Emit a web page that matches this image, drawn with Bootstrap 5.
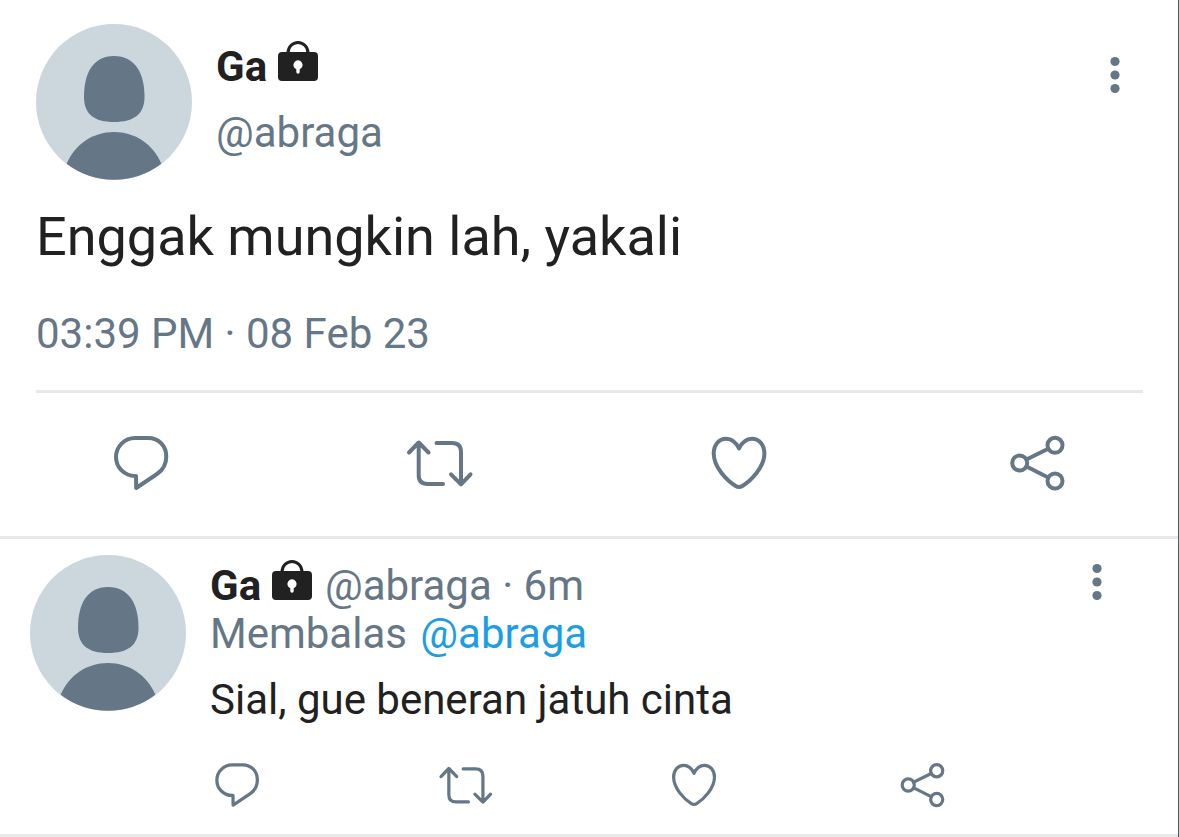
<!DOCTYPE html>
<html lang="id">
<head>
<meta charset="utf-8">
<meta name="viewport" content="width=device-width, initial-scale=1">
<title>Ga (@abraga)</title>
<link href="https://cdn.jsdelivr.net/npm/bootstrap@5.3.0/dist/css/bootstrap.min.css" rel="stylesheet">
<style>
:root { --ink:#212121; --slate:#657786; --rule:#e8e8e8; --sky:#1c9ee6; }
body { font-family:Roboto,"Liberation Sans",sans-serif; font-size:42px; line-height:48px; color:var(--ink); background:#fff; }
main { border-right:1px solid #54575a; }
article { border-bottom:3px solid var(--rule); }
.slate { color:var(--slate); }
.post { padding-top:24px; }
.post-body { padding:0 35px 0 36px; }
.post-names { margin-top:19px; gap:18px; }
.post-text { font-size:54px; line-height:64px; margin:25px 0 41px; }
.post-time { padding-bottom:32px; border-bottom:3px solid var(--rule); }
.reply { padding-top:16px; }
.reply-head { padding:0 53px 0 30px; }
.reply-names { margin-top:7px; }
.reply-text { margin-top:18px; }
.gap-avatar { gap:24px; }
.avatar { width:156px; height:156px; }
.lock { width:40px; height:40px; margin-top:-4px; vertical-align:baseline; }
.icon-btn { padding:0; border:0; background:none; color:var(--slate); line-height:0; }
.menu-btn { width:56px; height:54px; }
.post .menu-btn { margin-top:24px; }
.post-actions { padding:34px 104px 37px 105px; }
.post-actions svg { width:72px; height:72px; }
.reply-actions { padding:32px 226px 20px 208px; }
.reply-actions svg { width:58px; height:58px; }
.handle { margin-left:3px; }
.mention { color:var(--sky); text-decoration:none; }
.line-art { fill:none; stroke:currentColor; stroke-width:4; stroke-linecap:round; stroke-linejoin:round; }
</style>
</head>
<body>
<svg class="d-none" aria-hidden="true">
  <symbol id="person" viewBox="0 0 156 156">
    <circle cx="78" cy="78" r="78" fill="#ccd6dd"/>
    <path fill="#657786" d="M78 32C99 32 108.500 49 108.500 73C108.500 90 98 98 78 98S48 90 48 73C48 49 57 32 78 32Z"/>
    <path fill="#657786" d="M30.600 139.800C39 120 57 108 78 108S117 120 125.400 139.800A78 78 0 0 1 30.600 139.800Z"/>
  </symbol>
  <symbol id="padlock" viewBox="0 0 40 40">
    <path fill="none" stroke="#212121" stroke-width="3" d="M10 13V12A10 10.500 0 0 1 30 12V13"/>
    <path fill="#212121" fill-rule="evenodd" d="M4 11H36A4 4 0 0 1 40 15V36A4 4 0 0 1 36 40H4A4 4 0 0 1 0 36V15A4 4 0 0 1 4 11ZM18.300 28.200V31A1.700 1.700 0 0 0 21.700 31V28.200A4.600 4.600 0 1 0 18.300 28.200Z"/>
  </symbol>
  <symbol id="dots" viewBox="0 0 56 54"><g fill="currentColor"><circle cx="28" cy="13.500" r="4.600"/><circle cx="28" cy="27" r="4.600"/><circle cx="28" cy="40.500" r="4.600"/></g></symbol>
  <symbol id="bubble" viewBox="0 0 72 72"><path class="line-art" d="M31 49H30A19 19 0 0 1 30 11H43C54 11 61.300 19 61.300 29.500C61.300 37 58 43 52 47L31.200 61Z"/></symbol>
  <symbol id="repost" viewBox="0 0 72 72"><path class="line-art" d="M5 25.500L14.700 15.500L24.500 25.500M14.700 16V48Q14.700 57 23.500 57H39M32.500 16H48Q57 16 57 25V57M47 47.300L57 57.300L66.500 47.300"/></symbol>
  <symbol id="heart" viewBox="0 0 72 72"><path class="line-art" d="M36 21.500C32.700 14.500 28.200 11.700 23.200 11.700C15.700 11.700 10.700 18 10.700 26.500C10.700 40 23.700 53.500 32.700 59Q36 61 39.300 59C48.300 53.500 61.400 40 61.400 26.500C61.400 18 56.400 11.700 48.900 11.700C43.900 11.700 39.300 14.500 36 21.500Z"/></symbol>
  <symbol id="share" viewBox="0 0 72 72"><g class="line-art"><circle cx="17.700" cy="36" r="7.500"/><circle cx="53" cy="18.300" r="7.500"/><circle cx="53" cy="54" r="7.500"/><path d="M24.500 32.500L46.200 21.700M24.500 39.500L46.200 50.500"/></g></symbol>
</svg>
<main>
  <article class="post">
    <div class="post-body">
      <header class="d-flex align-items-start gap-avatar">
        <svg class="avatar flex-shrink-0" aria-hidden="true"><use href="#person"/></svg>
        <div class="post-names d-flex flex-column flex-grow-1">
          <div><strong>Ga</strong> <svg class="lock" role="img" aria-label="Terkunci"><use href="#padlock"/></svg></div>
          <div class="slate">@abraga</div>
        </div>
        <button type="button" class="icon-btn menu-btn" aria-label="Menu"><svg width="56" height="54"><use href="#dots"/></svg></button>
      </header>
      <p class="post-text">Enggak mungkin lah, yakali</p>
      <div class="post-time slate">03:39 PM · 08 Feb 23</div>
    </div>
    <div class="post-actions d-flex justify-content-between">
      <button type="button" class="icon-btn" aria-label="Balas"><svg><use href="#bubble"/></svg></button>
      <button type="button" class="icon-btn" aria-label="Retweet"><svg><use href="#repost"/></svg></button>
      <button type="button" class="icon-btn" aria-label="Suka"><svg><use href="#heart"/></svg></button>
      <button type="button" class="icon-btn" aria-label="Bagikan"><svg><use href="#share"/></svg></button>
    </div>
  </article>
  <article class="reply">
    <div class="reply-head d-flex align-items-start gap-avatar">
      <svg class="avatar flex-shrink-0" aria-hidden="true"><use href="#person"/></svg>
      <div class="reply-names flex-grow-1">
        <div><strong>Ga</strong> <svg class="lock" role="img" aria-label="Terkunci"><use href="#padlock"/></svg> <span class="slate handle">@abraga · 6m</span></div>
        <div class="slate">Membalas <a class="mention handle" href="#">@abraga</a></div>
        <p class="reply-text mb-0">Sial, gue beneran jatuh cinta</p>
      </div>
      <button type="button" class="icon-btn menu-btn" aria-label="Menu"><svg width="56" height="54"><use href="#dots"/></svg></button>
    </div>
    <div class="reply-actions d-flex justify-content-between">
      <button type="button" class="icon-btn" aria-label="Balas"><svg><use href="#bubble"/></svg></button>
      <button type="button" class="icon-btn" aria-label="Retweet"><svg><use href="#repost"/></svg></button>
      <button type="button" class="icon-btn" aria-label="Suka"><svg><use href="#heart"/></svg></button>
      <button type="button" class="icon-btn" aria-label="Bagikan"><svg><use href="#share"/></svg></button>
    </div>
  </article>
</main>
<script src="https://cdn.jsdelivr.net/npm/bootstrap@5.3.0/dist/js/bootstrap.bundle.min.js"></script>
</body>
</html>
